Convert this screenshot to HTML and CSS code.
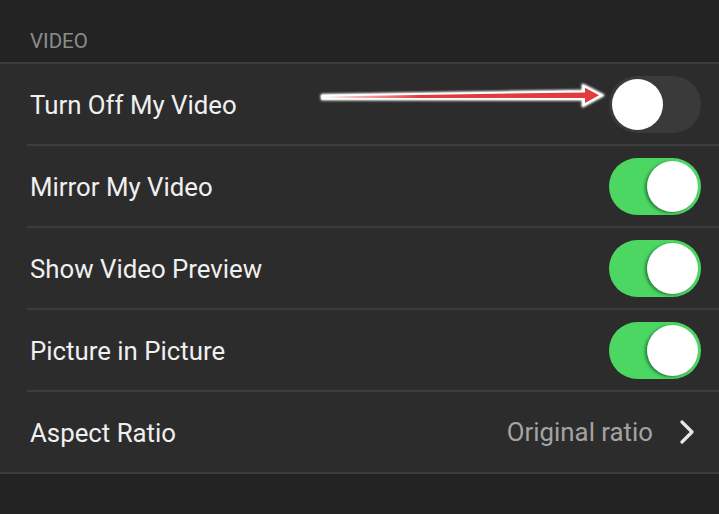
FILE: index.html
```html
<!DOCTYPE html>
<html>
<head>
<meta charset="utf-8">
<link rel="stylesheet" href="styles.css">
</head>
<body>
<div class="page">
  <div class="section-title">VIDEO</div>
  <div class="list">
    <div class="row">
      <span class="label">Turn Off My Video</span>
      <span class="toggle"><span class="knob"></span></span>
    </div>
    <div class="row">
      <span class="label">Mirror My Video</span>
      <span class="toggle on"><span class="knob"></span></span>
    </div>
    <div class="row">
      <span class="label">Show Video Preview</span>
      <span class="toggle on"><span class="knob"></span></span>
    </div>
    <div class="row">
      <span class="label">Picture in Picture</span>
      <span class="toggle on"><span class="knob"></span></span>
    </div>
    <div class="row last">
      <span class="label">Aspect Ratio</span>
      <span class="value">Original ratio
        <svg class="chevron" width="16" height="24" viewBox="0 0 16 24"><path d="M3 2 L13 12 L3 22" fill="none" stroke="#e6e6e6" stroke-width="3.2" stroke-linecap="round" stroke-linejoin="round"/></svg>
      </span>
    </div>
  </div>
  <svg class="arrow" width="719" height="140" viewBox="0 0 719 140">
    <defs>
      <filter id="glow" x="-10%" y="-50%" width="120%" height="200%">
        <feGaussianBlur stdDeviation="1.2"/>
      </filter>
      <linearGradient id="red" x1="322" y1="0" x2="420" y2="0" gradientUnits="userSpaceOnUse">
        <stop offset="0" stop-color="#ffffff"/>
        <stop offset="0.25" stop-color="#f4c8c8"/>
        <stop offset="1" stop-color="#e23b3d"/>
      </linearGradient>
    </defs>
    <polygon points="322,95.3 583,91 583,85 603,95.3 583,106 583,99.2 322,99" fill="#fff" stroke="#fff" stroke-width="3" stroke-linejoin="round" filter="url(#glow)"/>
    <polygon points="322,95.6 583,91.3 583,85.5 602,95.3 583,105.5 583,98.9 322,98.7" fill="#fff" stroke="#fff" stroke-width="1.5" stroke-linejoin="round"/>
    <polygon points="326,96.4 585,92.4 585,87.8 599,95.3 585,103 585,98 326,97.9" fill="url(#red)"/>
  </svg>
</div>
</body>
</html>
```
FILE: styles.css
```css
html, body {
  margin: 0;
  padding: 0;
  background: #232323;
}
body {
  font-family: Roboto, "Liberation Sans", sans-serif;
  width: 719px;
  height: 514px;
  overflow: hidden;
}
.page {
  position: relative;
  width: 719px;
  height: 514px;
  background: #232323;
}
.section-title {
  height: 62px;
  box-sizing: border-box;
  padding: 30px 0 0 30px;
  font-size: 20.5px;
  line-height: 23px;
  color: #8c8c8c;
}
.list {
  background: #2c2c2c;
  border-top: 2px solid #3c3c3c;
  border-bottom: 2px solid #3c3c3c;
}
.row {
  height: 80px;
  margin-left: 27px;
  padding: 0 18px 0 3px;
  display: flex;
  align-items: center;
  justify-content: space-between;
  border-bottom: 2px solid #3c3c3c;
}
.row.last {
  border-bottom: none;
  padding-right: 24px;
}
.label {
  color: #f0f0f0;
  font-size: 25.8px;
  position: relative;
  top: 1px;
}
.value {
  color: #a3a3a3;
  font-size: 25.8px;
  display: flex;
  align-items: center;
  gap: 26px;
}
.chevron {
  display: block;
}
.toggle {
  width: 92px;
  height: 57px;
  border-radius: 29px;
  background: #3a3a3a;
  box-sizing: border-box;
  padding: 3px;
  display: flex;
  justify-content: flex-start;
}
.toggle.on {
  background: #4cd763;
  justify-content: flex-end;
}
.knob {
  width: 51px;
  height: 51px;
  border-radius: 50%;
  background: #ffffff;
}
.toggle.on .knob {
  box-shadow: -2px 1px 3px rgba(0, 60, 20, 0.55);
}
.arrow {
  position: absolute;
  left: 0;
  top: 0;
}
```
